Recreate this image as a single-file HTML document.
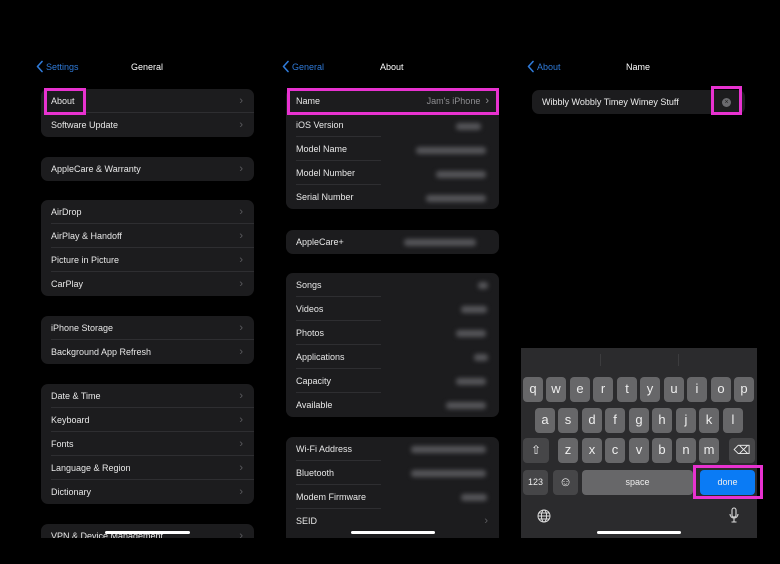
<!DOCTYPE html>
<html><head><meta charset="utf-8"><style>
*{margin:0;padding:0;box-sizing:border-box}
body{width:780px;height:564px;background:#000;position:relative;overflow:hidden;font-family:"Liberation Sans",sans-serif;color:#e8e8e8;font-size:9px}
.a{position:absolute}
.card{position:absolute;background:#1c1c1e;border-radius:7px;overflow:hidden}
.row{position:absolute;left:0;right:0;height:24px;line-height:25px;padding-left:10px;white-space:nowrap}
.row.s::after{content:"";position:absolute;left:10px;right:0;bottom:0;height:1px;background:#2e2e31}
.chev{position:absolute;right:11px;top:0;color:#5c5c60;font-size:11px}
.nav{position:absolute;top:62px;font-size:9px}
.back{color:#2f7ad8}
.back svg{position:absolute;left:0;top:-2px}
.back span{padding-left:10px}
.bl{position:absolute;height:7px;background:#56565a;border-radius:3px;filter:blur(2.5px)}
.pink{position:absolute;border:3px solid #e832d0}
.k{position:absolute;background:#676769;border-radius:4px;color:#eee;text-align:center;font-size:13px;line-height:24px;width:20px;height:25px}
.d{background:#464648;font-size:9px}
.hb{position:absolute;height:3px;background:#fff;border-radius:2px}
</style></head><body>

<!-- Panel 1 -->
<div class="nav back" style="left:36px"><svg width="7" height="13" viewBox="0 0 7 13" fill="none" stroke="#2f7ad8" stroke-width="1.6" stroke-linecap="round" stroke-linejoin="round"><path d="M6 1.5L1.5 6.5L6 11.5"/></svg><span>Settings</span></div>
<div class="nav" style="left:131px;color:#fff">General</div>

<div class="card" style="left:41px;top:89px;width:213px;height:48px">
<div class="row s" style="top:0">About<span class="chev">&#8250;</span></div>
<div class="row" style="top:24px">Software Update<span class="chev">&#8250;</span></div></div>
<div class="pink" style="left:44px;top:88px;width:42px;height:27px"></div>

<div class="card" style="left:41px;top:157px;width:213px;height:24px">
<div class="row" style="top:0">AppleCare &amp; Warranty<span class="chev">&#8250;</span></div></div>

<div class="card" style="left:41px;top:200px;width:213px;height:96px">
<div class="row s" style="top:0">AirDrop<span class="chev">&#8250;</span></div>
<div class="row s" style="top:24px">AirPlay &amp; Handoff<span class="chev">&#8250;</span></div>
<div class="row s" style="top:48px">Picture in Picture<span class="chev">&#8250;</span></div>
<div class="row" style="top:72px">CarPlay<span class="chev">&#8250;</span></div></div>

<div class="card" style="left:41px;top:316px;width:213px;height:48px">
<div class="row s" style="top:0">iPhone Storage<span class="chev">&#8250;</span></div>
<div class="row" style="top:24px">Background App Refresh<span class="chev">&#8250;</span></div></div>

<div class="card" style="left:41px;top:384px;width:213px;height:120px">
<div class="row s" style="top:0">Date &amp; Time<span class="chev">&#8250;</span></div>
<div class="row s" style="top:24px">Keyboard<span class="chev">&#8250;</span></div>
<div class="row s" style="top:48px">Fonts<span class="chev">&#8250;</span></div>
<div class="row s" style="top:72px">Language &amp; Region<span class="chev">&#8250;</span></div>
<div class="row" style="top:96px">Dictionary<span class="chev">&#8250;</span></div></div>

<div class="card" style="left:41px;top:524px;width:213px;height:14px;border-radius:7px 7px 0 0">
<div class="row" style="top:0">VPN &amp; Device Management<span class="chev">&#8250;</span></div></div>
<div class="hb" style="left:105px;top:531px;width:85px"></div>

<!-- Panel 2 -->
<div class="nav back" style="left:282px"><svg width="7" height="13" viewBox="0 0 7 13" fill="none" stroke="#2f7ad8" stroke-width="1.6" stroke-linecap="round" stroke-linejoin="round"><path d="M6 1.5L1.5 6.5L6 11.5"/></svg><span>General</span></div>
<div class="nav" style="left:380px;color:#fff">About</div>

<div class="card" style="left:286px;top:89px;width:213px;height:120px">
<div class="row s" style="top:0">Name<span class="chev" style="color:#8e8e92;right:10px;font-size:9px">Jam's iPhone &nbsp;<span style="font-size:11px">&#8250;</span></span></div>
<div class="row s" style="top:24px;right:118px">iOS Version</div>
<div class="row s" style="top:48px;right:118px">Model Name</div>
<div class="row s" style="top:72px;right:118px">Model Number</div>
<div class="row" style="top:96px">Serial Number</div>
<div class="bl" style="left:170px;top:34px;width:25px"></div>
<div class="bl" style="left:130px;top:58px;width:70px"></div>
<div class="bl" style="left:150px;top:82px;width:50px"></div>
<div class="bl" style="left:140px;top:106px;width:60px"></div>
</div>
<div class="pink" style="left:287px;top:88px;width:212px;height:27px"></div>

<div class="card" style="left:286px;top:230px;width:213px;height:24px">
<div class="row" style="top:0">AppleCare+</div>
<div class="bl" style="left:118px;top:9px;width:72px"></div></div>

<div class="card" style="left:286px;top:273px;width:213px;height:144px">
<div class="row s" style="top:0;right:118px">Songs</div>
<div class="row s" style="top:24px;right:118px">Videos</div>
<div class="row s" style="top:48px;right:118px">Photos</div>
<div class="row s" style="top:72px;right:118px">Applications</div>
<div class="row s" style="top:96px;right:118px">Capacity</div>
<div class="row" style="top:120px">Available</div>
<div class="bl" style="left:192px;top:9px;width:10px"></div>
<div class="bl" style="left:175px;top:33px;width:26px"></div>
<div class="bl" style="left:170px;top:57px;width:30px"></div>
<div class="bl" style="left:188px;top:81px;width:14px"></div>
<div class="bl" style="left:170px;top:105px;width:30px"></div>
<div class="bl" style="left:160px;top:129px;width:40px"></div>
</div>

<div class="card" style="left:286px;top:437px;width:213px;height:101px;border-radius:7px 7px 0 0">
<div class="row s" style="top:0;right:118px">Wi-Fi Address</div>
<div class="row s" style="top:24px;right:118px">Bluetooth</div>
<div class="row s" style="top:48px;right:118px">Modem Firmware</div>
<div class="row" style="top:72px">SEID<span class="chev">&#8250;</span></div>
<div class="bl" style="left:125px;top:9px;width:75px"></div>
<div class="bl" style="left:125px;top:33px;width:75px"></div>
<div class="bl" style="left:175px;top:57px;width:26px"></div>
</div>
<div class="hb" style="left:351px;top:531px;width:84px"></div>

<!-- Panel 3 -->
<div class="nav back" style="left:527px"><svg width="7" height="13" viewBox="0 0 7 13" fill="none" stroke="#2f7ad8" stroke-width="1.6" stroke-linecap="round" stroke-linejoin="round"><path d="M6 1.5L1.5 6.5L6 11.5"/></svg><span>About</span></div>
<div class="nav" style="left:626px;color:#fff">Name</div>
<div class="card" style="left:532px;top:90px;width:213px;height:24px">
<div class="row" style="top:0;color:#eee">Wibbly Wobbly Timey Wimey Stuff</div>
<div class="a" style="left:190px;top:8px;width:9px;height:9px;border-radius:50%;background:#6a6a6e;color:#222;font-size:7px;line-height:9px;text-align:center">&#215;</div>
</div>
<div class="pink" style="left:711px;top:86px;width:31px;height:29px"></div>

<div class="a" style="left:521px;top:348px;width:236px;height:190px;background:#2b2b2d"></div>
<div class="a" style="left:600px;top:354px;width:1px;height:12px;background:#3c3c3e"></div>
<div class="a" style="left:678px;top:354px;width:1px;height:12px;background:#3c3c3e"></div>

<div class="k" style="left:523px;top:377px">q</div>
<div class="k" style="left:546px;top:377px">w</div>
<div class="k" style="left:570px;top:377px">e</div>
<div class="k" style="left:593px;top:377px">r</div>
<div class="k" style="left:617px;top:377px">t</div>
<div class="k" style="left:640px;top:377px">y</div>
<div class="k" style="left:664px;top:377px">u</div>
<div class="k" style="left:687px;top:377px">i</div>
<div class="k" style="left:711px;top:377px">o</div>
<div class="k" style="left:734px;top:377px">p</div>

<div class="k" style="left:535px;top:408px">a</div>
<div class="k" style="left:558px;top:408px">s</div>
<div class="k" style="left:582px;top:408px">d</div>
<div class="k" style="left:605px;top:408px">f</div>
<div class="k" style="left:629px;top:408px">g</div>
<div class="k" style="left:652px;top:408px">h</div>
<div class="k" style="left:676px;top:408px">j</div>
<div class="k" style="left:699px;top:408px">k</div>
<div class="k" style="left:723px;top:408px">l</div>

<div class="k d" style="left:523px;top:438px;width:26px;font-size:12px">&#8679;</div>
<div class="k" style="left:558px;top:438px">z</div>
<div class="k" style="left:582px;top:438px">x</div>
<div class="k" style="left:605px;top:438px">c</div>
<div class="k" style="left:629px;top:438px">v</div>
<div class="k" style="left:652px;top:438px">b</div>
<div class="k" style="left:676px;top:438px">n</div>
<div class="k" style="left:699px;top:438px">m</div>
<div class="k d" style="left:729px;top:438px;width:26px;font-size:12px">&#9003;</div>

<div class="k d" style="left:523px;top:470px;width:25px">123</div>
<div class="k d" style="left:553px;top:470px;width:25px;font-size:13px">&#9786;</div>
<div class="k" style="left:582px;top:470px;width:111px;font-size:9px">space</div>
<div class="k" style="left:700px;top:470px;width:55px;font-size:9px;background:#0a7bf5">done</div>
<div class="pink" style="left:693px;top:465px;width:70px;height:34px"></div>

<svg class="a" style="left:537px;top:509px" width="14" height="14" viewBox="0 0 14 14" fill="none" stroke="#ddd" stroke-width="1"><circle cx="7" cy="7" r="6"/><ellipse cx="7" cy="7" rx="2.6" ry="6"/><path d="M1 7h12M2 4h10M2 10h10"/></svg>
<svg class="a" style="left:728px;top:507px" width="12" height="17" viewBox="0 0 12 17" fill="none" stroke="#ddd" stroke-width="1.1"><rect x="4" y="1" width="4" height="9" rx="2"/><path d="M2 7a4 4 0 0 0 8 0M6 11v4M3.5 15h5"/></svg>
<div class="hb" style="left:597px;top:531px;width:84px"></div>
</body></html>
